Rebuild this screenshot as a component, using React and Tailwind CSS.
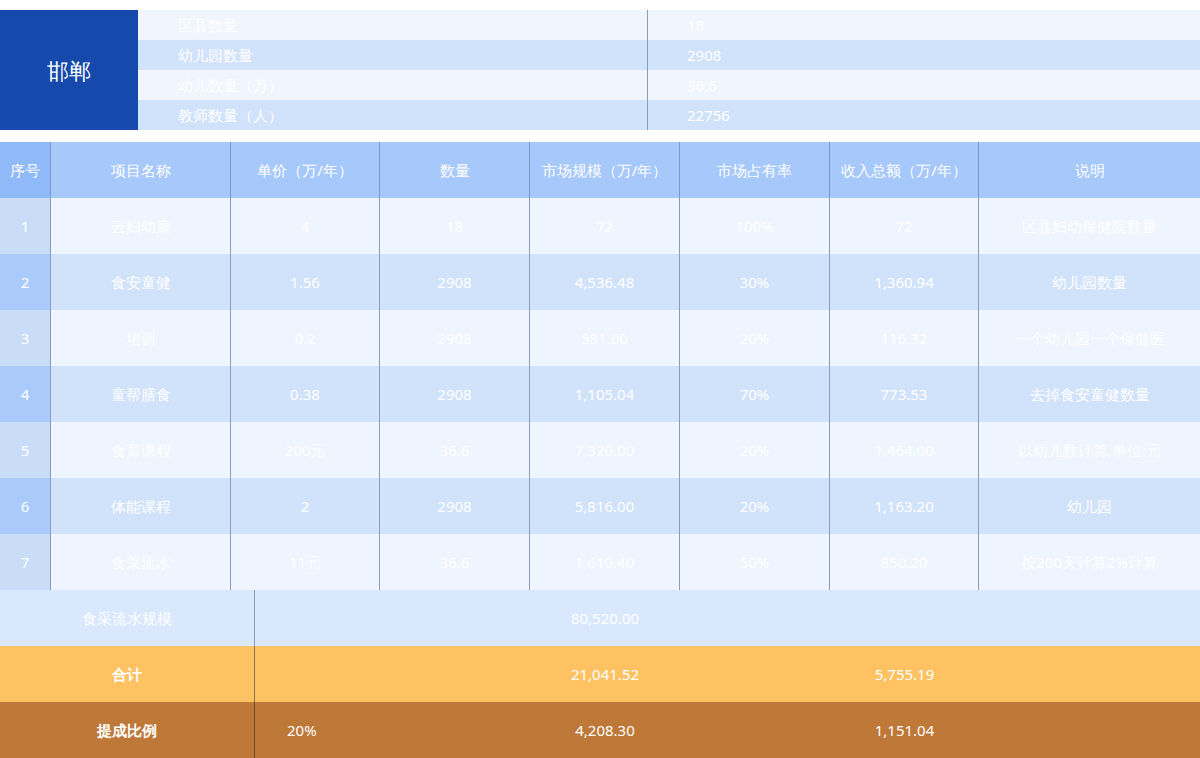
const INFO = [
  ['区县数量', '18'],
  ['幼儿园数量', '2908'],
  ['幼儿数量（万）', '36.6'],
  ['教师数量（人）', '22756'],
];

const HEAD = ['序号', '项目名称', '单价（万/年）', '数量', '市场规模（万/年）', '市场占有率', '收入总额（万/年）', '说明'];

const ROWS = [
  ['1', '云妇幼康', '4', '18', '72', '100%', '72', '区县妇幼保健院数量'],
  ['2', '食安童健', '1.56', '2908', '4,536.48', '30%', '1,360.94', '幼儿园数量'],
  ['3', '培训', '0.2', '2908', '581.60', '20%', '116.32', '一个幼儿园一个保健医'],
  ['4', '童帮膳食', '0.38', '2908', '1,105.04', '70%', '773.53', '去掉食安童健数量'],
  ['5', '食育课程', '200元', '36.6', '7,320.00', '20%', '1,464.00', '以幼儿数计算,单位:元'],
  ['6', '体能课程', '2', '2908', '5,816.00', '20%', '1,163.20', '幼儿园'],
  ['7', '食采流水', '11元', '36.6', '1,610.40', '50%', '850.20', '按200天计算2%计算'],
];

const cols = 'grid grid-cols-[51px_180px_149px_150px_150px_150px_149px_1fr]';

export default function App() {
  return (
    <div className="w-[1200px] h-[758px] bg-white text-white text-[15px] font-['Noto_Sans_CJK_SC','Noto_Sans',sans-serif]">
      <div className="h-[10px]" />
      <div className="flex h-[120px]">
        <div className="w-[138px] bg-[#1549ab] flex items-center justify-center text-[22px] font-medium">邯郸</div>
        <div className="flex-1 flex flex-col">
          {INFO.map(([k, v], i) => (
            <div key={k} className={`flex h-[30px] items-center ${i % 2 ? 'bg-[#d1e2fb]' : 'bg-[#f0f5fe]'}`}>
              <div className="w-[510px] h-full flex items-center pl-[40px] border-r border-[#8a9cc0]">{k}</div>
              <div className="pl-[39px]">{v}</div>
            </div>
          ))}
        </div>
      </div>
      <div className="h-[12px]" />
      <div className={`${cols} h-[56px] bg-[#a7c8fa]`}>
        {HEAD.map((h, i) => (
          <div key={h} className={`flex items-center justify-center border-r border-[#7f97c6] last:border-r-0 ${i === 0 ? 'bg-[#8fb9f8]' : ''}`}>{h}</div>
        ))}
      </div>
      {ROWS.map((r, ri) => (
        <div key={r[0]} className={`${cols} h-[56px] ${ri % 2 ? 'bg-[#d1e2fb]' : 'bg-[#eef5ff]'}`}>
          {r.map((c, i) => (
            <div key={i} className={`flex items-center justify-center border-r border-[#8a9cc0] last:border-r-0 ${i === 0 ? (ri % 2 ? 'bg-[#a9cafa]' : 'bg-[#c9ddf9]') : ''}`}>{c}</div>
          ))}
        </div>
      ))}
      <div className="flex h-[56px] bg-[#d9e8fd]">
        <div className="w-[255px] flex items-center justify-center border-r border-[#8a9cc0]">食采流水规模</div>
        <div className="w-[275px]" />
        <div className="w-[150px] flex items-center justify-center">80,520.00</div>
      </div>
      <div className="flex h-[56px] bg-[#fec263]">
        <div className="w-[255px] flex items-center justify-center border-r border-[#8a7450] font-bold">合计</div>
        <div className="w-[275px]" />
        <div className="w-[150px] flex items-center justify-center">21,041.52</div>
        <div className="w-[150px]" />
        <div className="w-[149px] flex items-center justify-center">5,755.19</div>
      </div>
      <div className="flex h-[56px] bg-[#be7838]">
        <div className="w-[255px] flex items-center justify-center border-r border-[#6e4a2a] font-bold">提成比例</div>
        <div className="w-[275px] flex items-center pl-[32px]">20%</div>
        <div className="w-[150px] flex items-center justify-center">4,208.30</div>
        <div className="w-[150px]" />
        <div className="w-[149px] flex items-center justify-center">1,151.04</div>
      </div>
    </div>
  );
}
